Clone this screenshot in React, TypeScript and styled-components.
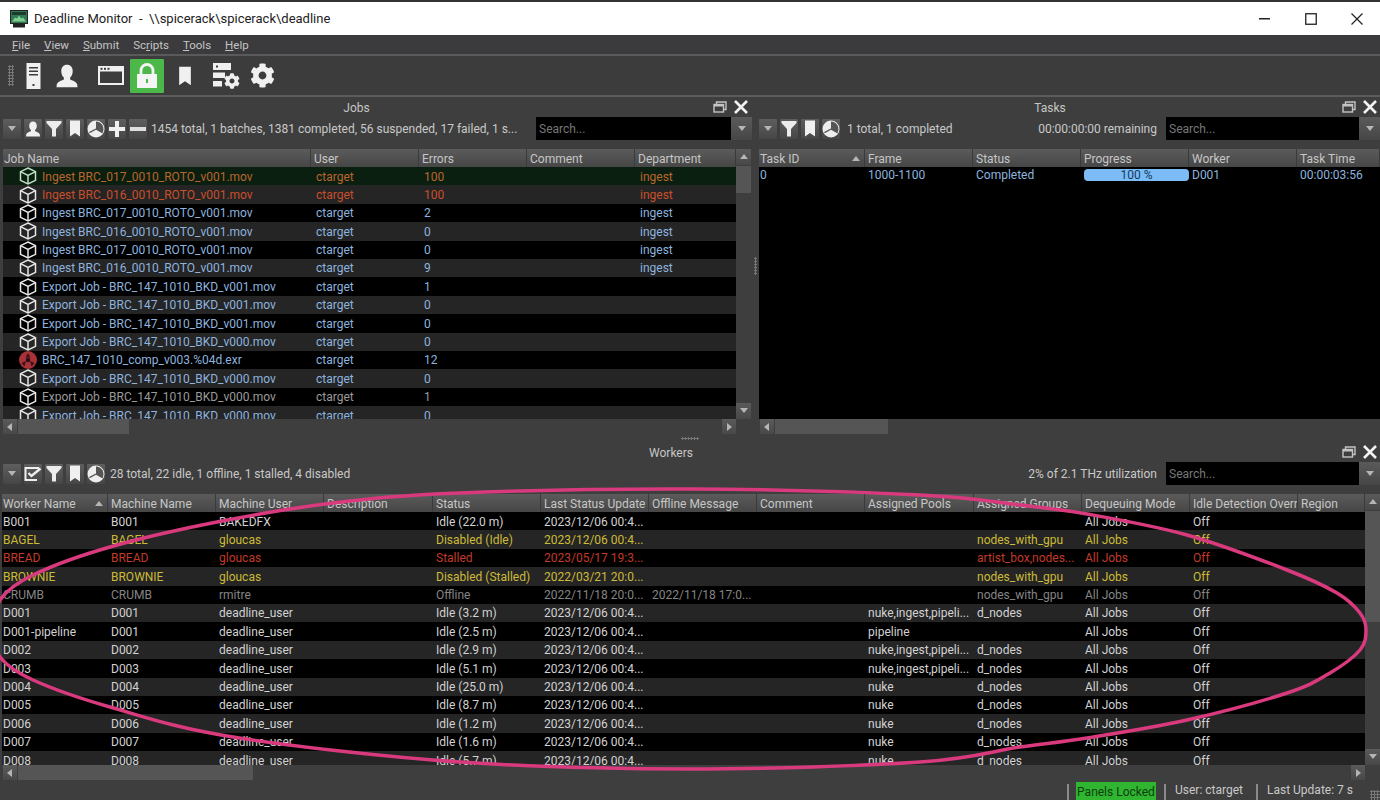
import React from "react";
import styled, { createGlobalStyle } from "styled-components";
import { FaCog } from "react-icons/fa";

const Global = createGlobalStyle`
  html, body { margin: 0; padding: 0; background: #3e3e3e; overflow: hidden; }
  * { box-sizing: border-box; }
  body { font-family: Roboto, "Noto Sans", sans-serif; font-size: 12px; color: #d0d0d0; }
`;

const Page = styled.div`
  position: relative; width: 1380px; height: 800px; display: flex; flex-direction: column;
  background: #3e3e3e; overflow: hidden;
`;
const TitleBar = styled.div`
  height: 35px; background: #fff; border-top: 2px solid #333; display: flex; align-items: center;
  padding-left: 10px; color: #222; font-size: 13px; flex: none;
`;
const TitleText = styled.span` margin-left: 6px; flex: 1; white-space: pre; `;
const WinBtn = styled.div` width: 46px; height: 33px; display: flex; align-items: center; justify-content: center; `;
const MenuBar = styled.div`
  height: 19px; background: #3b3b3d; display: flex; gap: 14px; padding-left: 12px; align-items: center;
  color: #c4c4c4; font-size: 11.5px; flex: none;
`;
const MenuItem = styled.span` u { text-underline-offset: 1px; } `;
const Toolbar = styled.div`
  height: 43px; background: #3c3c3c; border-top: 2px solid #5a5a5a; border-bottom: 2px solid #5c5c5c;
  display: flex; align-items: center; padding-left: 8px; flex: none;
`;
const Grip = styled.div<{ $w?: number; $h?: number }>`
  width: ${p => p.$w ?? 5}px; height: ${p => p.$h ?? 20}px; flex: none;
  background-image: radial-gradient(circle, #777 1px, transparent 1.1px);
  background-size: 3px 3px;
`;
const ToolSlot = styled.div<{ $w: number; $on?: boolean; $ml?: number }>`
  width: ${p => p.$w}px; height: 34px; display: flex; align-items: center; justify-content: center; flex: none;
  margin-left: ${p => p.$ml ?? 0}px; border-radius: 1px;
  background: ${p => (p.$on ? "#4cb84a" : "transparent")};
`;
const TopRow = styled.div` height: 337px; display: flex; flex: none; `;
const Panel = styled.div<{ $w?: number }>`
  width: ${p => (p.$w ? p.$w + "px" : "auto")}; flex: ${p => (p.$w ? "none" : "1")}; min-width: 0;
  display: flex; flex-direction: column; height: 100%;
`;
const VSplit = styled.div` width: 6px; flex: none; display: flex; align-items: center; justify-content: center; `;
const HSplit = styled.div` height: 8px; flex: none; display: flex; align-items: center; justify-content: center; `;
const PanelTitle = styled.div<{ $pr?: number }>`
  height: 20px; display: flex; align-items: center; flex: none; color: #c6c6c6; font-size: 12px; padding-right: ${p => p.$pr ?? 2}px;
`;
const TitleLabel = styled.div` flex: 1; text-align: center; padding-top: 1px; `;
const TitleGap = styled.div` width: 6px; flex: none; `;
const PanelBar = styled.div<{ $pl?: number }>`
  height: 23px; display: flex; align-items: center; flex: none; padding-left: ${p => p.$pl ?? 3}px; gap: 3px;
  color: #c9c9c9; font-size: 12px;
`;
const BarBtn = styled.div<{ $w?: number }>`
  width: ${p => p.$w ?? 18}px; height: 20px; flex: none; display: flex; align-items: center; justify-content: center;
  background: linear-gradient(#5e5e5e, #464646); border-radius: 1px;
`;
const BarText = styled.span<{ $ml: number }>` margin-left: ${p => p.$ml}px; white-space: nowrap; padding-top: 1px; `;
const BarFill = styled.div` flex: 1; `;
const SearchBox = styled.div<{ $w: number }>`
  width: ${p => p.$w}px; height: 23px; background: #000; color: #777; padding-left: 3px; line-height: 25px; flex: none;
  font-size: 12px; margin-left: 6px;
`;
const SearchDrop = styled.div`
  width: 21px; height: 23px; flex: none; display: flex; align-items: center; justify-content: center;
  background: linear-gradient(#5a5a5a, #464646); margin-left: -3px;
`;
const TableArea = styled.div<{ $mt: number; $h: number; $pl: number; $pr?: number }>`
  margin-top: ${p => p.$mt}px; height: ${p => p.$h}px; padding-left: ${p => p.$pl}px; padding-right: ${p => p.$pr ?? 0}px;
  display: flex; flex: none; overflow: hidden;
`;
const TableBody = styled.div` flex: 1; min-width: 0; background: #000; overflow: hidden; `;
const HeaderRow = styled.div<{ $cols: string }>`
  display: grid; grid-template-columns: ${p => p.$cols}; height: 18px;
  background: linear-gradient(#5b5b5b, #464646); color: #c6c6c6; font-size: 12px;
`;
const HeadCell = styled.div`
  display: flex; align-items: center; justify-content: space-between; padding: 1px 3px 0; white-space: nowrap; overflow: hidden;
  border-right: 1px solid #3a3a3a;
  &:first-child { padding-left: 1px; }
`;
const Row = styled.div<{ $cols: string; $bg: string; $fg: string; $h?: number }>`
  display: grid; grid-template-columns: ${p => p.$cols}; height: ${p => p.$h ?? 18.4}px; background: ${p => p.$bg}; color: ${p => p.$fg};
  font-size: 12px; line-height: ${p => p.$h ?? 18.4}px;
`;
const Cell = styled.div<{ $pl?: number }>`
  padding-left: ${p => p.$pl ?? 3}px; padding-top: 1px; white-space: nowrap; overflow: hidden; display: flex; align-items: center;
  &:first-child { padding-left: 1px; }
`;
const NameCell = styled(Cell)` && { padding-left: 16px; padding-top: 0; } gap: 5px; `;
const NameText = styled.span` padding-top: 1px; `;
const Progress = styled.div`
  width: 106px; height: 12px; background: #7cbcf6; border-radius: 4px; color: #123a60; text-align: center;
  line-height: 12px; font-size: 12px;
`;
const VScroll = styled.div`
  width: 15px; flex: none; background: #3e3e3e; display: flex; flex-direction: column; align-items: stretch;
`;
const ScrollArrow = styled.div`
  height: 16px; flex: none; display: flex; align-items: center; justify-content: center;
  background: linear-gradient(#5a5a5a, #484848);
`;
const VThumb = styled.div<{ $h: number }>` height: ${p => p.$h}px; flex: none; background: #555; margin-top: 1px; `;
const VTrack = styled.div` flex: 1; `;
const HScroll = styled.div<{ $pl: number; $pr: number }>`
  height: 15px; flex: none; display: flex; align-items: stretch; padding-left: ${p => p.$pl}px; padding-right: ${p => p.$pr}px;
`;
const HArrow = styled.div`
  width: 14px; flex: none; display: flex; align-items: center; justify-content: center;
  background: linear-gradient(#5a5a5a, #484848);
`;
const HThumb = styled.div<{ $w: number }>` width: ${p => p.$w}px; flex: none; background: #555; margin-left: 1px; `;
const HTrack = styled.div` flex: 1; `;
const Workers = styled.div` height: 338px; flex: none; `;
const StatusBar = styled.div`
  height: 20px; flex: none; display: flex; align-items: flex-end; justify-content: flex-end; color: #c9c9c9; font-size: 12px;
`;
const StatusSep = styled.div` width: 2px; height: 16px; background: #8a8a8a; flex: none; `;
const StatusGreen = styled.div`
  width: 80px; height: 18px; background: #2fb52f; color: #0f3d0f; text-align: center; line-height: 20px; margin: 0 8px 0 7px; flex: none;
`;
const StatusText = styled.div<{ $w: number }>` width: ${p => p.$w}px; padding-left: 9px; white-space: nowrap; line-height: 20px; flex: none; `;
const Overlay = styled.svg` position: absolute; left: 0; top: 0; pointer-events: none; `;
const GearWrap = styled.div` position: relative; width: 27px; height: 26px; svg:last-child { position: absolute; right: 0; bottom: 0; } `;
const NoShrinkSvg = styled.svg` flex: none; `;

/* ---------- drawings ---------- */
const Tri = ({ dir = "down", c = "#b5b5b5" }: { dir?: string; c?: string }) => {
  const pts: Record<string, string> = { down: "1,2 9,2 5,7", up: "1,7 9,7 5,2", left: "7,1 7,9 2,5", right: "3,1 3,9 8,5" };
  return <svg width="10" height="10" viewBox="0 0 10 10"><polygon points={pts[dir]} fill={c} /></svg>;
};
const Restore = () => (
  <svg width="14" height="12" viewBox="0 0 14 12" fill="none" stroke="#c4c4c4" strokeWidth="1.4">
    <rect x="1" y="3.5" width="9.5" height="7.5" /><path d="M3.5 3.5V1H13V8.5H10.5" /><path d="M1 4.5H10.5" strokeWidth="2" />
  </svg>
);
const CloseX = () => (
  <svg width="16" height="16" viewBox="0 0 16 16" stroke="#f2f2f2" strokeWidth="2.6"><path d="M2 2L14 14M14 2L2 14" /></svg>
);
const PanelBtns = () => (
  <>
    <Restore />
    <TitleGap />
    <CloseX />
  </>
);
const UserIcon = ({ s = 16 }: { s?: number }) => (
  <svg width={s} height={s} viewBox="0 0 16 16" fill="#f0f0f0">
    <path d="M8 0.5c-2.4 0-3.8 1.8-3.8 4.3 0 1.8.7 3.3 1.7 4.2v1.3c-1.9.8-4.2 1.5-4.7 3.2L1 15.5h14l-.2-2c-.5-1.700-2.800-2.400-4.700-3.200V9c1-.9 1.700-2.400 1.700-4.200C11.800 2.300 10.400.5 8 .5z" />
  </svg>
);
const FilterIcon = () => (
  <svg width="16" height="17" viewBox="0 0 16 17" fill="#ececec"><path d="M0.5 1h15v2L10 9v7.500H6V9L.5 3z" /></svg>
);
const BookmarkIcon = ({ w = 12, h = 17 }: { w?: number; h?: number }) => (
  <svg width={w} height={h} viewBox="0 0 12 17" fill="#f0f0f0"><path d="M1 0.500h10v16l-5-3.500-5 3.500z" /></svg>
);
const PieIcon = () => (
  <svg width="18" height="18" viewBox="0 0 18 18">
    <circle cx="9" cy="9" r="8.500" fill="#eee" />
    <path d="M9 9V1.500a7.500 7.500 0 0 1 6.500 11.200z" fill="#555" />
    <path d="M9 9L15.500 12.700" stroke="#555" strokeWidth="1.400" />
    <path d="M9 9L2.500 12.700" stroke="#555" strokeWidth="1.400" />
  </svg>
);
const PlusIcon = () => (
  <svg width="16" height="16" viewBox="0 0 16 16" fill="#efefef"><path d="M6 0h4v6h6v4h-6v6H6v-6H0V6h6z" /></svg>
);
const MinusIcon = () => (
  <svg width="16" height="16" viewBox="0 0 16 16" fill="#dedede"><rect x="0" y="6" width="16" height="4" /></svg>
);
const CheckIcon = () => (
  <svg width="18" height="16" viewBox="0 0 18 16" fill="none" stroke="#eee" strokeWidth="2">
    <path d="M13 14H1.500V2H15" /><path d="M4.500 7l3 3L16.500 2.500" strokeWidth="2.400" />
  </svg>
);
const Cube = ({ c = "#e8e8e8" }: { c?: string }) => (
  <NoShrinkSvg width="18" height="18" viewBox="0 0 18 18" fill="none" stroke={c} strokeWidth="1.500">
    <path d="M9 1L16.500 4.700V13.300L9 17L1.500 13.300V4.700Z" /><path d="M1.500 4.700L9 8.500L16.500 4.700M9 8.500V17" />
  </NoShrinkSvg>
);
const NukeIcon = () => (
  <NoShrinkSvg width="18" height="18" viewBox="0 0 18 18">
    <circle cx="9" cy="9" r="9" fill="#a8313a" />
    <circle cx="9" cy="9" r="2.200" fill="#2a0f10" />
    <path d="M9 2L6.500 6.500L11.500 6.500zM2.500 12L7 10L5.500 15.500zM15.500 12L11 10L12.500 15.500z" fill="#3a1416" />
  </NoShrinkSvg>
);
const ToolServer = () => (
  <svg width="15" height="26" viewBox="0 0 15 26" fill="#f0f0f0">
    <path fillRule="evenodd" d="M0.500 0H14.500V26H.5zM3 4v1.500h9V4zM3 7.500V9h9V7.500zM3 11v1.500h9V11zM6.500 21v2h2v-2z" />
  </svg>
);
const ToolWindow = () => (
  <svg width="28" height="21" viewBox="0 0 28 21">
    <path fill="#f0f0f0" fillRule="evenodd" d="M1 1H27V20H1zM3 6.500V18H25V6.500z" />
    <rect x="3.500" y="2.800" width="2" height="2" fill="#3c3c3c" /><rect x="7" y="2.800" width="2" height="2" fill="#3c3c3c" /><rect x="10.500" y="2.800" width="2" height="2" fill="#3c3c3c" />
  </svg>
);
const ToolLock = () => (
  <svg width="22" height="26" viewBox="0 0 22 26">
    <path d="M5 11V7.500a6 6 0 0 1 12 0V11" fill="none" stroke="#f4f4f4" strokeWidth="2.800" />
    <path fill="#f4f4f4" fillRule="evenodd" d="M1 11H21V25H1zM10 16v4h2v-4z" />
  </svg>
);
const ToolServerGear = () => (
  <GearWrap>
    <svg width="27" height="26" viewBox="0 0 27 26" fill="#efefef">
      <path fillRule="evenodd" d="M0 0H18V7H0zM3 2.500v2h2v-2z" />
      <path d="M0 9.500H12V15H0z" /><path d="M0 18H9V23.500H0z" />
    </svg>
    <FaCog size={16} color="#efefef" />
  </GearWrap>
);

/* ---------- data ---------- */
const BLUE = "#8db3df", ORANGE = "#b9662d", RED = "#c94f2a", GREY = "#9a9a9a", WHITE = "#d2d2d2", YEL = "#cdbb35", WRED = "#c23a28", OFF = "#858585";
const STRIPE = ["#000000", "#252526"];

const jobCols = "308px 108px 108px 108px 1fr";
type Job = { n: string; e: string; d?: string; c: string; bg?: string; nuke?: boolean; cube?: string };
const ing17 = "Ingest BRC_017_0010_ROTO_v001.mov", ing16 = "Ingest BRC_016_0010_ROTO_v001.mov";
const e1 = "Export Job - BRC_147_1010_BKD_v001.mov", e0 = "Export Job - BRC_147_1010_BKD_v000.mov";
const jobs: Job[] = [
  { n: ing17, e: "100", d: "ingest", c: ORANGE, bg: "#0b1f10", cube: "#bfe0c8" },
  { n: ing16, e: "100", d: "ingest", c: RED },
  { n: ing17, e: "2", d: "ingest", c: BLUE },
  { n: ing16, e: "0", d: "ingest", c: BLUE },
  { n: ing17, e: "0", d: "ingest", c: BLUE },
  { n: ing16, e: "9", d: "ingest", c: BLUE },
  { n: e1, e: "1", c: BLUE },
  { n: e1, e: "0", c: BLUE },
  { n: e1, e: "0", c: BLUE },
  { n: e0, e: "0", c: BLUE },
  { n: "BRC_147_1010_comp_v003.%04d.exr", e: "12", c: BLUE, nuke: true },
  { n: e0, e: "0", c: BLUE },
  { n: e0, e: "1", c: GREY },
  { n: e0, e: "0", c: BLUE },
];

const taskCols = "106px 108px 108px 108px 108px 1fr";

const workerCols = "106px 108px 108px 109px 108px 108px 108px 108px 109px 108px 108px 108px 1fr";
const workerHeads = ["Worker Name", "Machine Name", "Machine User", "Description", "Status", "Last Status Update", "Offline Message", "Comment", "Assigned Pools", "Assigned Groups", "Dequeuing Mode", "Idle Detection Overr", "Region"];
type W = { n: string; m: string; u: string; s: string; t: string; o?: string; p?: string; g?: string; c: string };
const T = "2023/12/06 00:4...";
const POOL = "nuke,ingest,pipeli...";
const wk = (n: string, s: string, p: string, g = "d_nodes", m = n): W => ({ n, m, u: "deadline_user", s, t: T, p, g, c: WHITE });
const workers: W[] = [
  { n: "B001", m: "B001", u: "BAKEDFX", s: "Idle (22.0 m)", t: T, c: WHITE },
  { n: "BAGEL", m: "BAGEL", u: "gloucas", s: "Disabled (Idle)", t: T, g: "nodes_with_gpu", c: YEL },
  { n: "BREAD", m: "BREAD", u: "gloucas", s: "Stalled", t: "2023/05/17 19:3...", g: "artist_box,nodes...", c: WRED },
  { n: "BROWNIE", m: "BROWNIE", u: "gloucas", s: "Disabled (Stalled)", t: "2022/03/21 20:0...", g: "nodes_with_gpu", c: YEL },
  { n: "CRUMB", m: "CRUMB", u: "rmitre", s: "Offline", t: "2022/11/18 20:0...", o: "2022/11/18 17:0...", g: "nodes_with_gpu", c: OFF },
  wk("D001", "Idle (3.2 m)", POOL),
  wk("D001-pipeline", "Idle (2.5 m)", "pipeline", "", "D001"),
  wk("D002", "Idle (2.9 m)", POOL),
  wk("D003", "Idle (5.1 m)", POOL),
  wk("D004", "Idle (25.0 m)", "nuke"),
  wk("D005", "Idle (8.7 m)", "nuke"),
  wk("D006", "Idle (1.2 m)", "nuke"),
  wk("D007", "Idle (1.6 m)", "nuke"),
  wk("D008", "Idle (5.7 m)", "nuke"),
];

const ellipse: [number, number][] = [
  [460, 493], [690, 489], [920, 495], [1020, 505], [1087, 514], [1187, 535], [1287, 570], [1337, 593], [1360, 613], [1366, 630],
  [1360, 650], [1330, 673], [1287, 693], [1187, 720], [1087, 738], [1020, 747], [920, 762], [690, 769], [460, 762], [233, 737], [110, 707],
  [33, 680], [0, 657], [-4, 630], [0, 600], [33, 575], [110, 547], [217, 522], [333, 503],
];
function smooth(p: [number, number][]) {
  const n = p.length;
  let d = `M${p[0][0]} ${p[0][1]}`;
  for (let i = 0; i < n; i++) {
    const a = p[(i - 1 + n) % n], b = p[i], c = p[(i + 1) % n], e = p[(i + 2) % n];
    d += `C${(b[0] + (c[0] - a[0]) / 6).toFixed(1)} ${(b[1] + (c[1] - a[1]) / 6).toFixed(1)} ${(c[0] - (e[0] - b[0]) / 6).toFixed(1)} ${(c[1] - (e[1] - b[1]) / 6).toFixed(1)} ${c[0]} ${c[1]}`;
  }
  return d + "Z";
}

const Menu = ["File", "View", "Submit", "Scripts", "Tools", "Help"];
const under = [0, 0, 0, 2, 0, 0];

export default function App() {
  return (
    <Page>
      <Global />
      <TitleBar>
        <NoShrinkSvg width="18" height="18" viewBox="0 0 18 18">
          <rect x="0.500" y="0.500" width="17" height="13" fill="#2f7a52" stroke="#222" />
          <rect x="2" y="2" width="14" height="3" fill="#1d3b2c" />
          <path d="M2 11.500l3-4 2 1 2-3 2 3 2-1 3 4z" fill="#7fd08f" />
          <rect x="3" y="14" width="12" height="3.500" fill="#222" />
        </NoShrinkSvg>
        <TitleText>Deadline Monitor  -  \\spicerack\spicerack\deadline</TitleText>
        <WinBtn><svg width="12" height="2"><rect width="11" height="1.500" fill="#222" /></svg></WinBtn>
        <WinBtn><svg width="12" height="12"><rect x="0.750" y="0.750" width="10.500" height="10.500" fill="none" stroke="#222" strokeWidth="1.300" /></svg></WinBtn>
        <WinBtn><svg width="12" height="12" stroke="#222" strokeWidth="1.200"><path d="M0.500 0.500L11.500 11.500M11.500 0.500L0.500 11.500" /></svg></WinBtn>
      </TitleBar>
      <MenuBar>
        {Menu.map((m, i) => (
          <MenuItem key={m}>
            {m.slice(0, under[i])}<u>{m[under[i]]}</u>{m.slice(under[i] + 1)}
          </MenuItem>
        ))}
      </MenuBar>
      <Toolbar>
        <Grip $w={6} $h={21} />
        <ToolSlot $w={15} $ml={12}><ToolServer /></ToolSlot>
        <ToolSlot $w={24} $ml={14}><UserIcon s={24} /></ToolSlot>
        <ToolSlot $w={28} $ml={18}><ToolWindow /></ToolSlot>
        <ToolSlot $w={34} $on $ml={5}><ToolLock /></ToolSlot>
        <ToolSlot $w={14} $ml={14}><BookmarkIcon w={14} h={24} /></ToolSlot>
        <ToolSlot $w={27} $ml={21}><ToolServerGear /></ToolSlot>
        <ToolSlot $w={26} $ml={9}><FaCog size={25} color="#f0f0f0" /></ToolSlot>
      </Toolbar>
      <TopRow>
        <Panel $w={752}>
          <PanelTitle $pr={3}>
            <TitleLabel>Jobs</TitleLabel>
            <PanelBtns />
          </PanelTitle>
          <PanelBar>
            <BarBtn><Tri /></BarBtn>
            <BarBtn><UserIcon /></BarBtn>
            <BarBtn><FilterIcon /></BarBtn>
            <BarBtn><BookmarkIcon /></BarBtn>
            <BarBtn><PieIcon /></BarBtn>
            <BarBtn><PlusIcon /></BarBtn>
            <BarBtn><MinusIcon /></BarBtn>
            <BarText $ml={1}>1454 total, 1 batches, 1381 completed, 56 suspended, 17 failed, 1 s...</BarText>
            <BarFill />
            <SearchBox $w={195}>Search...</SearchBox>
            <SearchDrop><Tri /></SearchDrop>
          </PanelBar>
          <TableArea $mt={9} $h={270} $pl={3} $pr={1}>
            <TableBody>
              <HeaderRow $cols={jobCols}>
                {["Job Name", "User", "Errors", "Comment", "Department"].map(h => <HeadCell key={h}>{h}</HeadCell>)}
              </HeaderRow>
              {jobs.map((j, i) => (
                <Row key={i} $cols={jobCols} $bg={j.bg ?? STRIPE[i % 2]} $fg={j.c}>
                  <NameCell>{j.nuke ? <NukeIcon /> : <Cube c={j.cube} />}<NameText>{j.n}</NameText></NameCell>
                  <Cell $pl={5}>ctarget</Cell>
                  <Cell $pl={5}>{j.e}</Cell>
                  <Cell />
                  <Cell $pl={5}>{j.d}</Cell>
                </Row>
              ))}
            </TableBody>
            <VScroll>
              <ScrollArrow><Tri dir="up" /></ScrollArrow>
              <VThumb $h={27} />
              <VTrack />
              <ScrollArrow><Tri /></ScrollArrow>
            </VScroll>
          </TableArea>
          <HScroll $pl={3} $pr={16}>
            <HArrow><Tri dir="left" /></HArrow>
            <HThumb $w={111} />
            <HTrack />
            <HArrow><Tri dir="right" /></HArrow>
          </HScroll>
        </Panel>
        <VSplit><Grip $w={3} $h={18} /></VSplit>
        <Panel>
          <PanelTitle>
            <TitleLabel>Tasks</TitleLabel>
            <PanelBtns />
          </PanelTitle>
          <PanelBar $pl={1}>
            <BarBtn><Tri /></BarBtn>
            <BarBtn><FilterIcon /></BarBtn>
            <BarBtn><BookmarkIcon /></BarBtn>
            <BarBtn><PieIcon /></BarBtn>
            <BarText $ml={4}>1 total, 1 completed</BarText>
            <BarFill />
            <BarText $ml={0}>00:00:00:00 remaining</BarText>
            <SearchBox $w={193}>Search...</SearchBox>
            <SearchDrop><Tri /></SearchDrop>
          </PanelBar>
          <TableArea $mt={9} $h={270} $pl={1}>
            <TableBody>
              <HeaderRow $cols={taskCols}>
                <HeadCell>Task ID<Tri dir="up" /></HeadCell>
                {["Frame", "Status", "Progress", "Worker", "Task Time"].map(h => <HeadCell key={h}>{h}</HeadCell>)}
              </HeaderRow>
              <Row $cols={taskCols} $bg="#000" $fg={BLUE} $h={15}>
                <Cell>0</Cell><Cell>1000-1100</Cell><Cell>Completed</Cell>
                <Cell><Progress>100 %</Progress></Cell>
                <Cell>D001</Cell><Cell>00:00:03:56</Cell>
              </Row>
            </TableBody>
          </TableArea>
          <HScroll $pl={2} $pr={0}>
            <HArrow><Tri dir="left" /></HArrow>
            <HThumb $w={113} />
            <HTrack />
          </HScroll>
        </Panel>
      </TopRow>
      <HSplit><Grip $w={18} $h={3} /></HSplit>
      <Workers>
        <Panel>
          <PanelTitle>
            <TitleLabel>Workers</TitleLabel>
            <PanelBtns />
          </PanelTitle>
          <PanelBar>
            <BarBtn><Tri /></BarBtn>
            <BarBtn><CheckIcon /></BarBtn>
            <BarBtn><FilterIcon /></BarBtn>
            <BarBtn><BookmarkIcon /></BarBtn>
            <BarBtn><PieIcon /></BarBtn>
            <BarText $ml={2}>28 total, 22 idle, 1 offline, 1 stalled, 4 disabled</BarText>
            <BarFill />
            <BarText $ml={0}>2% of 2.1 THz utilization</BarText>
            <SearchBox $w={193}>Search...</SearchBox>
            <SearchDrop><Tri /></SearchDrop>
          </PanelBar>
          <TableArea $mt={9} $h={271} $pl={2}>
            <TableBody>
              <HeaderRow $cols={workerCols}>
                {workerHeads.map((h, i) => <HeadCell key={h}>{h}{i === 0 && <Tri dir="up" />}</HeadCell>)}
              </HeaderRow>
              {workers.map((w, i) => (
                <Row key={i} $cols={workerCols} $bg={STRIPE[i % 2]} $fg={w.c}>
                  <Cell>{w.n}</Cell><Cell>{w.m}</Cell><Cell>{w.u}</Cell><Cell />
                  <Cell>{w.s}</Cell><Cell>{w.t}</Cell><Cell>{w.o}</Cell><Cell />
                  <Cell>{w.p}</Cell><Cell>{w.g}</Cell><Cell>All Jobs</Cell><Cell>Off</Cell><Cell />
                </Row>
              ))}
            </TableBody>
            <VScroll>
              <ScrollArrow><Tri dir="up" /></ScrollArrow>
              <VThumb $h={111} />
              <VTrack />
              <ScrollArrow><Tri /></ScrollArrow>
            </VScroll>
          </TableArea>
          <HScroll $pl={3} $pr={15}>
            <HArrow><Tri dir="left" /></HArrow>
            <HThumb $w={235} />
            <HTrack />
            <HArrow><Tri dir="right" /></HArrow>
          </HScroll>
        </Panel>
      </Workers>
      <StatusBar>
        <StatusSep />
        <StatusGreen>Panels Locked</StatusGreen>
        <StatusSep />
        <StatusText $w={90}>User: ctarget</StatusText>
        <StatusSep />
        <StatusText $w={112}>Last Update: 7 s</StatusText>
        <Grip $w={10} $h={10} />
      </StatusBar>
      <Overlay width="1380" height="800" viewBox="0 0 1380 800">
        <path d={smooth(ellipse)} fill="none" stroke="#d93a7e" strokeWidth="3.5" />
      </Overlay>
    </Page>
  );
}
